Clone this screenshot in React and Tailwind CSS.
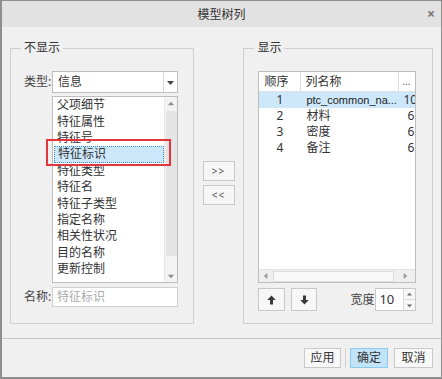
import React from "react";

const FONT = { fontFamily: '"Noto Sans", "Noto Sans CJK SC", sans-serif' };

const leftItems = [
  "父项细节",
  "特征属性",
  "特征号",
  "特征标识",
  "特征类型",
  "特征名",
  "特征子类型",
  "指定名称",
  "相关性状况",
  "目的名称",
  "更新控制",
];

const rows = [
  ["1", "ptc_common_na...", "10"],
  ["2", "材料", "6"],
  ["3", "密度", "6"],
  ["4", "备注", "6"],
];

function Arrow({ dir }) {
  return (
    <svg width="9" height="10" viewBox="0 0 9 10">
      {dir === "up" ? (
        <path d="M4.5 0.5 L8.8 5 L6 5 L6 9.5 L3 9.5 L3 5 L0.2 5 Z" fill="#3a3a3a" />
      ) : (
        <path d="M4.5 9.5 L8.8 5 L6 5 L6 0.5 L3 0.5 L3 5 L0.2 5 Z" fill="#3a3a3a" />
      )}
    </svg>
  );
}

function Tri({ dir, color = "#555", size = 7 }) {
  const d = {
    up: "M0 5 L3.5 1 L7 5 Z",
    down: "M0 2 L3.5 6 L7 2 Z",
    left: "M5 0 L1 3.5 L5 7 Z",
    right: "M2 0 L6 3.5 L2 7 Z",
  }[dir];
  return (
    <svg width={size} height={size} viewBox="0 0 7 7">
      <path d={d} fill={color} />
    </svg>
  );
}

export default function App() {
  return (
    <div
      style={FONT}
      className="w-[442px] h-[379px] flex flex-col bg-[#f0f0f0] border-t border-r border-l-2 border-b-2 border-[#8e8e8e] text-[12px] text-[#333] overflow-hidden"
    >
      {/* Title bar */}
      <div className="h-[26px] shrink-0 bg-[#e2e2e2] flex items-center relative">
        <div className="flex-1 text-center text-[12px] text-[#333] leading-none pt-[1px]">模型树列</div>
        <div className="absolute right-[6px] top-[6px] text-[14px] leading-none text-[#777] font-bold">×</div>
      </div>

      {/* Body */}
      <div className="flex-1 flex pt-[13px] pl-[8px] pr-[8px]">
        {/* Left group */}
        <fieldset className="w-[184px] h-[284px] border border-[#cfcfcf] m-0 p-0 min-w-0">
          <legend className="ml-[10px] px-[3px] text-[12px] leading-[16px] text-[#333]">不显示</legend>
          <div className="pl-[13px] pt-[15px] flex flex-col">
            <div className="flex items-center h-[22px]">
              <div className="w-[28px] text-[#444]">类型:</div>
              <div className="w-[126px] h-[22px] border border-[#bdbdbd] bg-white flex items-center">
                <div className="flex-1 pl-[5px] text-[#333]">信息</div>
                <div className="w-[14px] h-full border-l border-[#d6d6d6] flex items-center justify-center">
                  <Tri dir="down" color="#444" size={7} />
                </div>
              </div>
            </div>

            <div className="ml-[28px] mt-[3px] w-[126px] h-[187px] border border-[#bdbdbd] bg-white flex relative">
              <div className="flex-1 flex flex-col pt-[0px]">
                {leftItems.map((t, i) =>
                  i === 3 ? (
                    <div
                      key={t}
                      className="h-[16.4px] ml-[1px] bg-[#cde8fb] border border-dotted border-[#3d8fd1] flex items-center pl-[3px] leading-none"
                    >
                      {t}
                    </div>
                  ) : (
                    <div key={t} className="h-[16.4px] flex items-center pl-[4px] leading-none">
                      {t}
                    </div>
                  )
                )}
              </div>
              <div className="w-[13px] bg-[#f3f3f3] border-l border-[#e8e8e8] flex flex-col items-center">
                <div className="h-[13px] flex items-center justify-center">
                  <Tri dir="up" color="#8a8a8a" size={6} />
                </div>
                <div className="w-[11px] h-[145px] bg-[#e4e4e4] mt-[1px]" />
                <div className="flex-1" />
                <div className="h-[13px] flex items-center justify-center">
                  <Tri dir="down" color="#8a8a8a" size={6} />
                </div>
              </div>
              {/* red highlight */}
              <div className="absolute left-[-7px] top-[42px] w-[125px] h-[27px] border-2 border-[#e0363c] pointer-events-none" />
            </div>

            <div className="flex items-center mt-[4px] h-[20px]">
              <div className="w-[28px] text-[#444]">名称:</div>
              <div className="w-[126px] h-[20px] border border-[#d0d0d0] bg-white flex items-center pl-[4px] text-[#aaa]">
                特征标识
              </div>
            </div>
          </div>
        </fieldset>

        {/* Middle buttons */}
        <div className="w-[50px] h-[284px] flex flex-col items-center justify-center gap-[4px] pt-[2px]">
          <div className="w-[32px] h-[20px] border border-[#c8c8c8] bg-[#f6f6f6] flex items-center justify-center text-[10px] text-[#555] leading-none tracking-[1px]">
            &gt;&gt;
          </div>
          <div className="w-[32px] h-[20px] border border-[#c8c8c8] bg-[#f6f6f6] flex items-center justify-center text-[10px] text-[#555] leading-none tracking-[1px]">
            &lt;&lt;
          </div>
        </div>

        {/* Right group */}
        <fieldset className="w-[190px] h-[284px] border border-[#cfcfcf] m-0 p-0 min-w-0">
          <legend className="ml-[10px] px-[3px] text-[12px] leading-[16px] text-[#333]">显示</legend>
          <div className="pl-[14px] pt-[15px] flex flex-col w-[172px]">
            <div className="w-[158px] h-[212px] border border-[#bdbdbd] bg-white flex flex-col overflow-hidden">
              <div className="h-[20px] flex border-b border-[#e2e2e2] shrink-0">
                <div className="w-[42px] border-r border-[#dcdcdc] flex items-center pl-[5px]">顺序</div>
                <div className="w-[98px] border-r border-[#dcdcdc] flex items-center pl-[4px]">列名称</div>
                <div className="flex-1 flex items-center pl-[3px] text-[10px] text-[#666]">...</div>
              </div>
              {rows.map((r, i) => (
                <div
                  key={r[0]}
                  className={
                    "h-[16px] flex items-center shrink-0 leading-[16px] " + (i === 0 ? "bg-[#cde8fb]" : "")
                  }
                >
                  <div className="w-[42px] pl-[17px]">{r[0]}</div>
                  {i === 0 ? (
                    <div
                      className="w-[98px] pl-[5px] whitespace-nowrap overflow-hidden text-[11px] text-[#222]"
                      style={{ fontFamily: '"Liberation Sans", sans-serif' }}
                    >
                      {r[1]}
                    </div>
                  ) : (
                    <div className="w-[98px] pl-[5px] whitespace-nowrap overflow-hidden">{r[1]}</div>
                  )}
                  {i === 0 ? (
                    <div className="w-[16px] overflow-hidden whitespace-nowrap pl-[4px]">{r[2]}</div>
                  ) : (
                    <div className="w-[16px] overflow-hidden whitespace-nowrap text-right pr-[1px]">{r[2]}</div>
                  )}
                </div>
              ))}
              <div className="flex-1" />
              <div className="h-[13px] shrink-0 flex items-center bg-[#efefef] border-t border-[#e4e4e4]">
                <div className="w-[14px] flex items-center justify-center">
                  <Tri dir="left" color="#9a9a9a" size={6} />
                </div>
                <div className="w-[121px] h-[11px] bg-[#f9f9f9] border border-[#dedede]" />
                <div className="flex-1 flex items-center justify-center">
                  <Tri dir="right" color="#9a9a9a" size={6} />
                </div>
              </div>
            </div>

            <div className="w-[158px] mt-[5px] flex items-center h-[23px]">
              <div className="w-[27px] h-[23px] border border-[#c8c8c8] bg-[#f7f7f7] flex items-center justify-center">
                <Arrow dir="up" />
              </div>
              <div className="w-[26px] h-[23px] ml-[6px] border border-[#c8c8c8] bg-[#f7f7f7] flex items-center justify-center">
                <Arrow dir="down" />
              </div>
              <div className="flex-1" />
              <div className="text-[#444] mr-[1px]">宽度</div>
              <div className="w-[41px] h-[23px] border border-[#c8c8c8] bg-white flex">
                <div className="flex-1 flex items-center pl-[3px] text-[13px]">10</div>
                <div className="w-[12px] border-l border-[#dcdcdc] flex flex-col bg-[#f7f7f7]">
                  <div className="flex-1 flex items-center justify-center border-b border-[#dcdcdc]">
                    <Tri dir="up" color="#666" size={5} />
                  </div>
                  <div className="flex-1 flex items-center justify-center">
                    <Tri dir="down" color="#666" size={5} />
                  </div>
                </div>
              </div>
            </div>
          </div>
        </fieldset>
      </div>

      {/* Footer */}
      <div className="h-[39px] shrink-0 border-t border-[#c9c9c9] flex items-start justify-end pt-[9px] pr-[8px]">
        <div className="w-[37px] h-[20px] border border-[#c9c9c9] bg-[#f8f8f8] flex items-center justify-center leading-none">
          应用
        </div>
        <div className="w-[1px] h-[20px] bg-[#d4d4d4] ml-[4px] mr-[4px]" />
        <div className="w-[38px] h-[20px] border border-[#8ccaf0] bg-[#c2e4f9] flex items-center justify-center leading-none">
          确定
        </div>
        <div className="w-[39px] h-[20px] ml-[6px] border border-[#c9c9c9] bg-[#f8f8f8] flex items-center justify-center leading-none">
          取消
        </div>
      </div>
    </div>
  );
}
